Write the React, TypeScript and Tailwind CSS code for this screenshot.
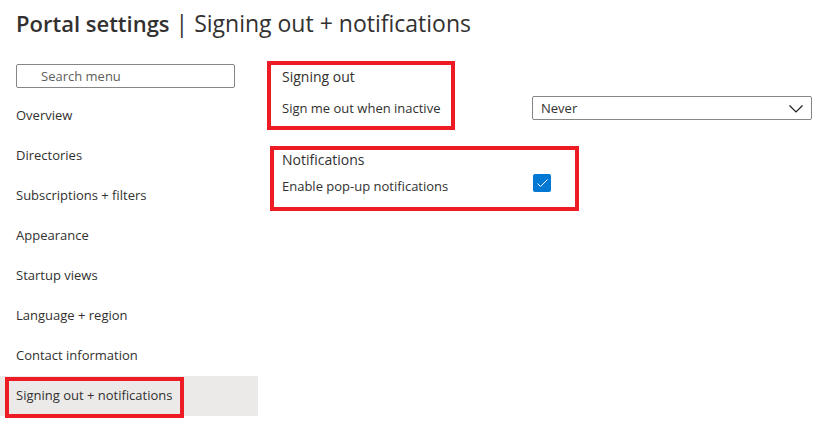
const items = [
  'Overview',
  'Directories',
  'Subscriptions + filters',
  'Appearance',
  'Startup views',
  'Language + region',
  'Contact information',
  'Signing out + notifications',
];

function Callout({ className }: { className: string }) {
  return <div aria-hidden="true" className={`pointer-events-none absolute border-4 border-[#ed1c24] ${className}`} />;
}

export default function App() {
  return (
    <div className="min-h-screen bg-white font-['Open_Sans',sans-serif] text-[13px] leading-5 text-[#323130]">
      <header className="px-4 pt-[7px]">
        <h1 className="text-[23px] leading-8">
          <span className="text-[22px] font-semibold">Portal settings</span> | Signing out + notifications
        </h1>
      </header>
      <div className="flex">
        <aside className="w-[258px] shrink-0 pt-[25px]">
          <div className="pr-[23px] pl-4">
            <input
              type="search"
              aria-label="Search menu"
              placeholder="Search menu"
              className="block h-6 w-full rounded-xs border border-[#868686] pl-6 placeholder:text-[#605e5c]"
            />
          </div>
          <nav className="mt-2">
            <ul>
              {items.map((item, i) => {
                const active = i === items.length - 1;
                return (
                  <li key={item} className="relative">
                    <a href="#" className={`flex h-10 items-center px-4 pb-0.5 ${active ? 'bg-[#ebeae9]' : ''}`}>
                      {item}
                    </a>
                    {active && <Callout className="-bottom-0.5 left-[5px] h-[41px] w-[179px]" />}
                  </li>
                );
              })}
            </ul>
          </nav>
        </aside>
        <main className="min-w-0 flex-1 pt-7 pr-[13px] pl-6">
          <section className="relative">
            <Callout className="-top-1.5 -left-[15px] h-[69px] w-[188px]" />
            <h2 className="text-[14px]">Signing out</h2>
            <div className="mt-[9px] flex items-center">
              <label htmlFor="timeout" className="w-[250px] shrink-0">Sign me out when inactive</label>
              <div className="relative flex-1">
                <select id="timeout" className="block h-6 w-full appearance-none rounded-xs border border-[#868686] bg-white pl-2">
                  <option>Never</option>
                </select>
                <svg aria-hidden="true" viewBox="0 0 16 10" className="pointer-events-none absolute top-2 right-2 h-[10px] w-4" fill="none" stroke="#201f1e" strokeWidth="1.2">
                  <path d="M1.5 1.5 8 8l6.5-6.5" />
                </svg>
              </div>
            </div>
          </section>
          <section className="relative mt-[30px]">
            <Callout className="-top-1 -left-3 h-[65px] w-[309px]" />
            <h2 className="text-[14px]">Notifications</h2>
            <div className="mt-1 flex items-start">
              <label htmlFor="popups" className="w-[251px] shrink-0 pt-0.5">Enable pop-up notifications</label>
              <span className="relative flex">
                <input id="popups" type="checkbox" defaultChecked className="size-[18px] appearance-none rounded-xs bg-[#0078d4]" />
                <svg aria-hidden="true" viewBox="0 0 18 18" className="pointer-events-none absolute inset-0" fill="none" stroke="white">
                  <path d="m4.5 9.5 3 3 7-7" />
                </svg>
              </span>
            </div>
          </section>
        </main>
      </div>
    </div>
  );
}
